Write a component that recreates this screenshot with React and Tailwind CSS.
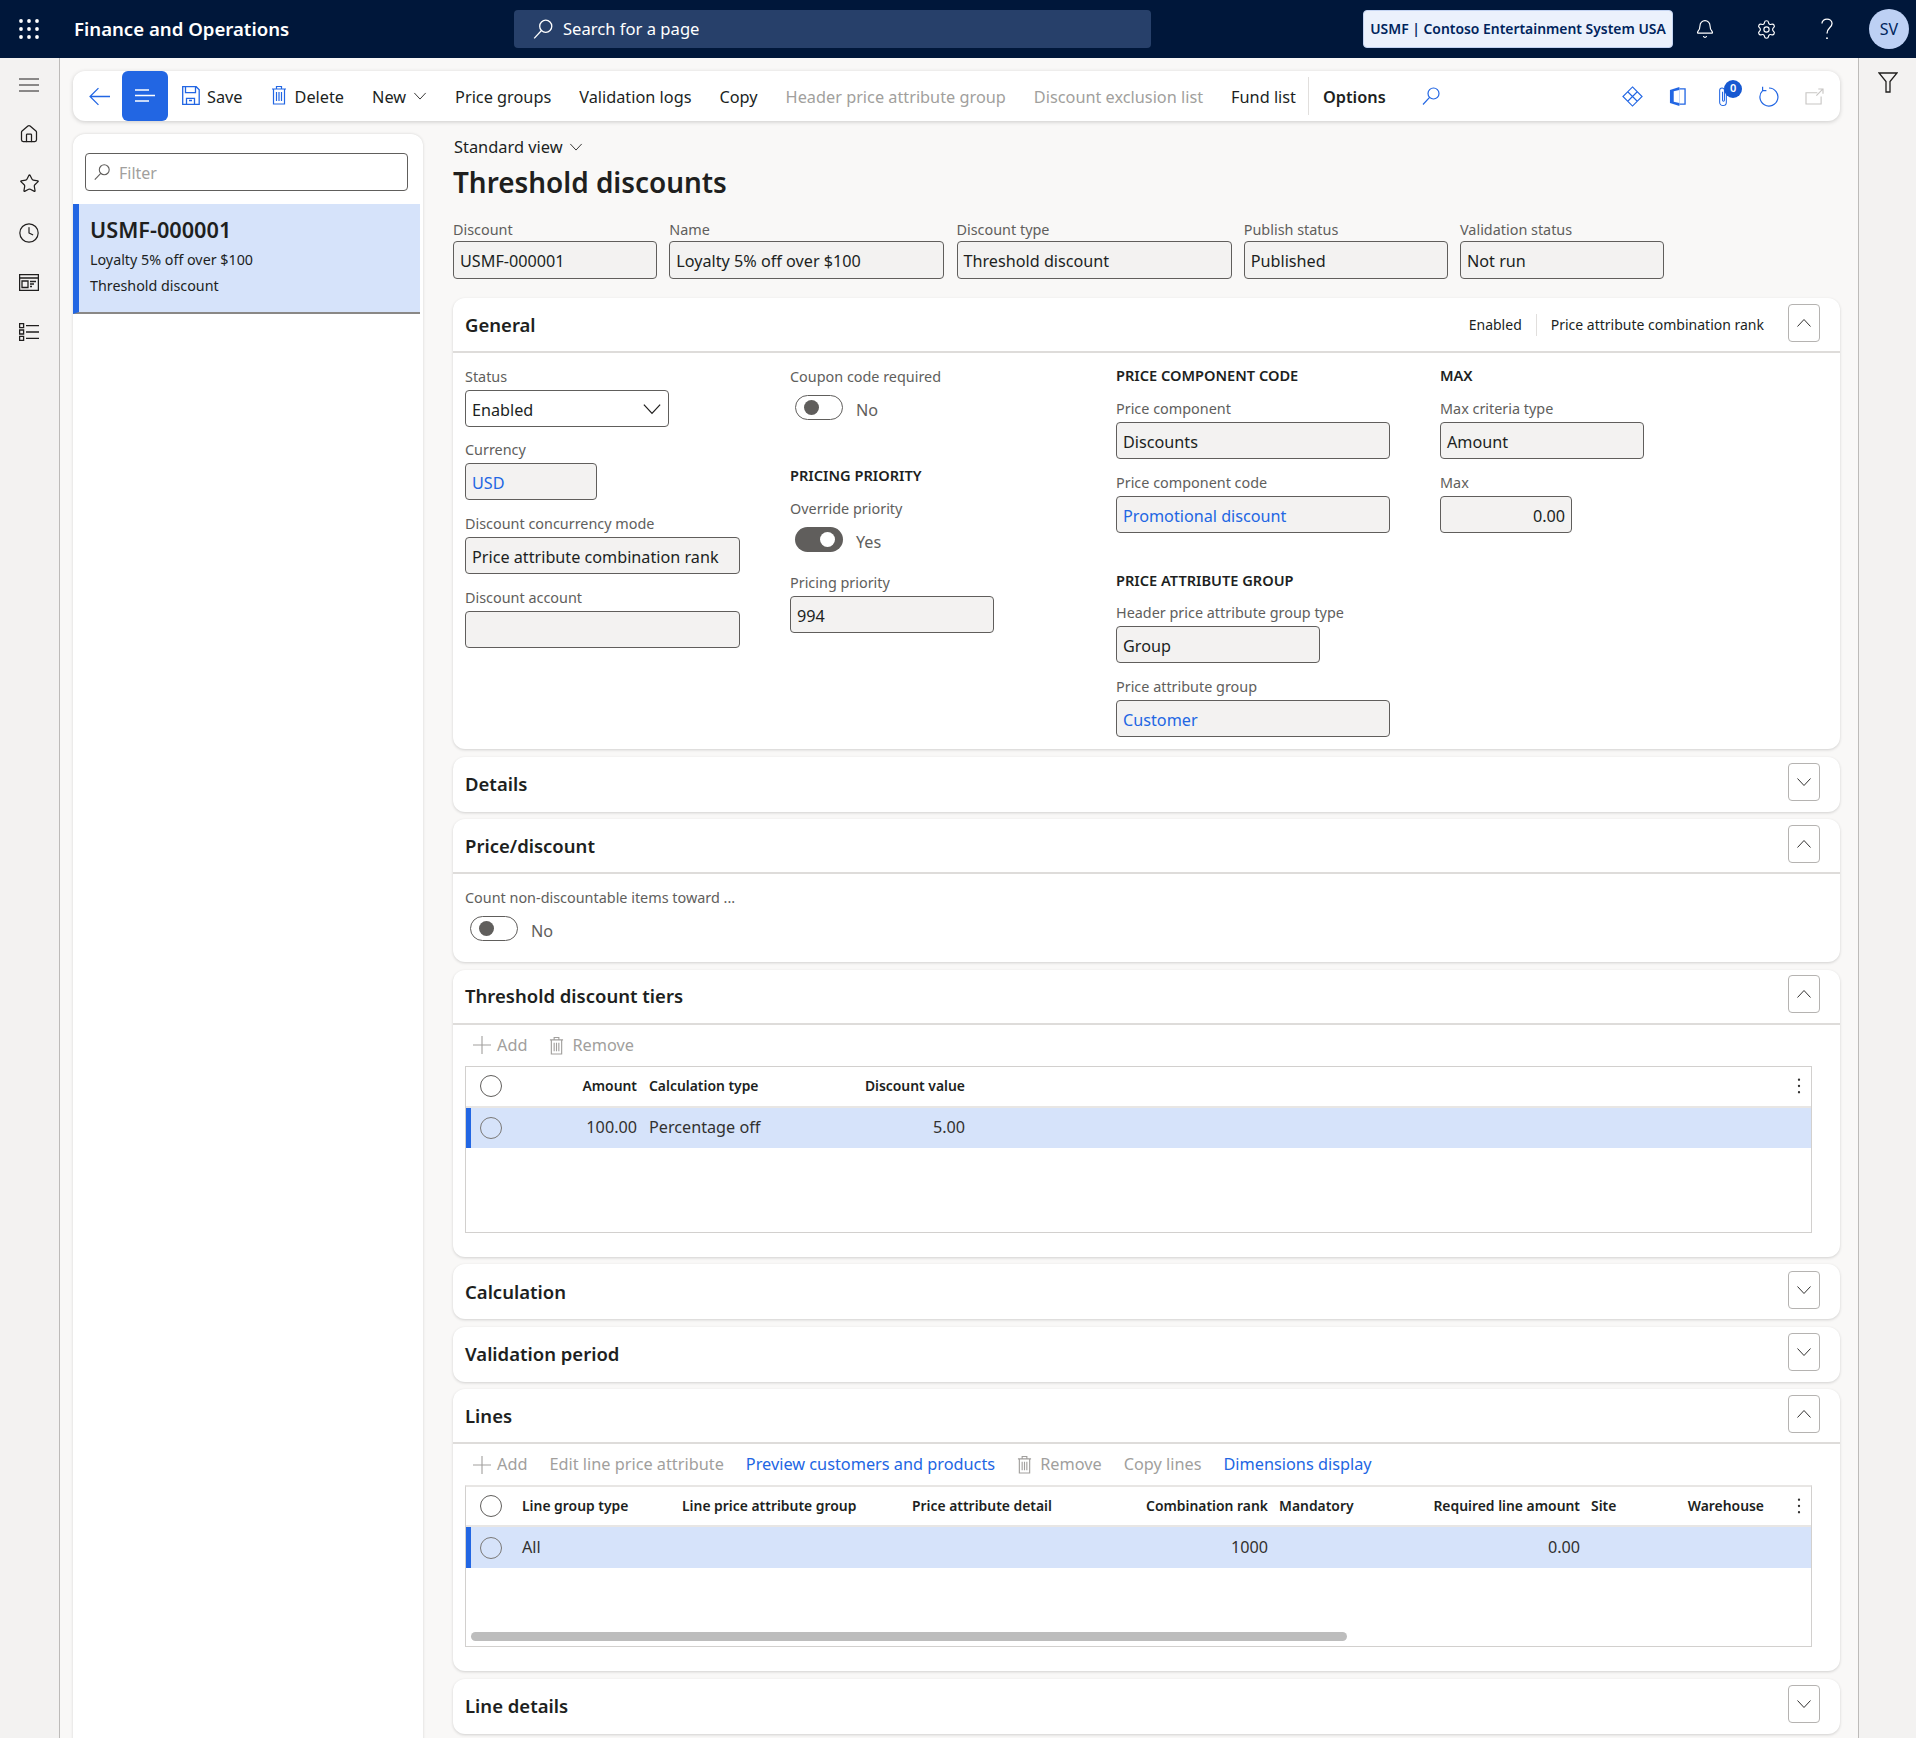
import React from "react";
import { Bell, Settings, Star, House, Clock } from "lucide-react";

const Chevron = ({ up, className = "w-[14px] h-[14px]" }) => (
  <svg viewBox="0 0 16 16" fill="none" stroke="currentColor" strokeWidth="1" className={className}>
    <path d={up ? "M1.5 11.5 8 4.5l6.5 7" : "M1.5 4.5 8 11.5l6.5-7"} />
  </svg>
);

const SearchIcon = ({ className }) => (
  <svg viewBox="0 0 20 20" fill="none" stroke="currentColor" strokeWidth="1.2" className={className}>
    <circle cx="12.5" cy="7.5" r="5.5" />
    <path d="M8.6 11.4 2 18.5" />
  </svg>
);

const Trash = ({ className }) => (
  <svg viewBox="0 0 16 20" fill="none" stroke="currentColor" strokeWidth="1.2" className={className}>
    <path d="M1 4h14M5.5 4V1.5h5V4M2.5 4v15h11V4M5.5 7v9M8 7v9M10.5 7v9" />
  </svg>
);

const Waffle = () => (
  <svg viewBox="0 0 20 20" fill="#fff" className="w-[20px] h-[20px]">
    {[2, 10, 18].map((y) =>
      [2, 10, 18].map((x) => <circle key={x + "-" + y} cx={x} cy={y} r="1.9" />)
    )}
  </svg>
);

const Dots = () => (
  <svg viewBox="0 0 4 18" fill="#323130" className="w-[4px] h-[16px]">
    <circle cx="2" cy="2" r="1.3" />
    <circle cx="2" cy="9" r="1.3" />
    <circle cx="2" cy="16" r="1.3" />
  </svg>
);

const RailButton = ({ children }) => (
  <div className="h-[49.5px] flex items-center justify-center text-[#201f1e]">{children}</div>
);

const LeftRail = () => (
  <div className="w-[60px] shrink-0 bg-[#f3f2f1] border-r border-[#bdbbb9] pt-[2px] pr-[1px]">
    <RailButton>
      <svg viewBox="0 0 20 14" fill="none" stroke="currentColor" strokeWidth="1" className="w-[20px] h-[14px]">
        <path d="M0 1h20M0 7h20M0 13h20" />
      </svg>
    </RailButton>
    <RailButton>
      <House size={20} strokeWidth={1.5} />
    </RailButton>
    <RailButton>
      <Star size={21} strokeWidth={1.4} />
    </RailButton>
    <RailButton>
      <Clock size={22} strokeWidth={1.3} />
    </RailButton>
    <RailButton>
      <svg viewBox="0 0 20 17" fill="none" stroke="currentColor" strokeWidth="1.3" className="w-[20px] h-[17px]">
        <path d="M.6.6h18.8v15.8H.6zM.6 4h18.8M3 7h6v6.5H3zM11 7.500h6M11 10h4M11 12.500h2" />
      </svg>
    </RailButton>
    <RailButton>
      <svg viewBox="0 0 20 18" fill="none" stroke="currentColor" strokeWidth="1.3" className="w-[20px] h-[18px]">
        <path d="M.6.6h4v4h-4zM.6 7h4v4h-4zM.6 13.400h4v4h-4zM7 2.600h13M7 9h13M7 15.400h13" />
      </svg>
    </RailButton>
  </div>
);

const TopBar = () => (
  <header className="h-[58px] shrink-0 bg-[#00173a] flex items-center text-white">
    <div className="w-[74px] pl-[19px]">
      <Waffle />
    </div>
    <div className="w-[440px] text-[18.600px] font-semibold">Finance and Operations</div>
    <div className="w-[637px] h-[38px] bg-[#27406a] rounded flex items-center pl-[18px] gap-[9px] text-[16.600px]">
      <SearchIcon className="w-[22px] h-[22px]" />
      Search for a page
    </div>
    <div className="ml-[212px] w-[310px] h-[38px] rounded bg-[#ebf1fc] border border-[#c4d4f2] flex items-center justify-center text-[13.900px] font-semibold text-[#00245c]">
      USMF | Contoso Entertainment System USA
    </div>
    <div className="w-[64px] flex justify-center">
      <Bell size={20} strokeWidth={1.4} />
    </div>
    <div className="w-[58px] flex justify-center">
      <Settings size={21} strokeWidth={1.3} />
    </div>
    <div className="w-[64px] flex justify-center">
      <svg viewBox="0 0 14 24" fill="none" stroke="#fff" strokeWidth="1.4" className="w-[14px] h-[22px]">
        <path d="M1.500 6c0-6.500 11-6.500 11 0 0 4.500-5.500 4.500-5.500 11" />
        <circle cx="7" cy="22" r="1" fill="#fff" stroke="none" />
      </svg>
    </div>
    <div className="ml-[10px] w-[40px] h-[40px] rounded-full bg-[#bdd0f4] text-[#00245c] flex items-center justify-center text-[16px]">
      SV
    </div>
  </header>
);

const ActionItem = ({ children, muted, bold, gap = "gap-[7px]" }) => (
  <div
    className={`flex items-center pt-[2px] whitespace-nowrap ${gap} ${muted ? "text-[#a19f9d]" : "text-[#201f1e]"} ${bold ? "font-semibold" : ""}`}
  >
    {children}
  </div>
);

const ToolIcon = ({ children }) => <div className="w-[45.500px] flex justify-center">{children}</div>;

const ActionBar = () => (
  <div className="h-[50px] bg-white rounded-xl shadow-[0_1px_4px_rgba(0,0,0,0.18)] flex items-center text-[16.300px]">
    <div className="w-[49px] pl-[16px] text-[#2266e3]">
      <svg viewBox="0 0 20 20" fill="none" stroke="currentColor" strokeWidth="1.2" className="w-[21px] h-[21px]">
        <path d="M20 10H1M9 2l-8 8 8 8" />
      </svg>
    </div>
    <div className="w-[46px] h-[50px] bg-[#2266e3] rounded-md flex items-center justify-center">
      <svg viewBox="0 0 20 14" fill="none" stroke="#fff" strokeWidth="1.300" className="w-[20px] h-[14px]">
        <path d="M0 1h14M0 6.500h20M0 12h14" />
      </svg>
    </div>
    <div className="flex items-center gap-[28px] pl-[14px]">
      <ActionItem>
        <svg viewBox="0 0 18 19" fill="none" stroke="#2266e3" strokeWidth="1.3" className="w-[18px] h-[19px] -mt-[4px]">
          <path d="M.7.700h13.500l3 3v14.600H.7zM3.500.7v6h10v-6M4.500 18.300v-6h8v6M7 14.500h3" />
        </svg>
        Save
      </ActionItem>
      <ActionItem gap="gap-[8px]">
        <Trash className="w-[16px] h-[20px] -mt-[4px] text-[#2266e3]" />
        Delete
      </ActionItem>
      <ActionItem>
        New
        <Chevron className="w-[14px] h-[14px] -mt-[2px]" />
      </ActionItem>
      <ActionItem>Price groups</ActionItem>
      <ActionItem>Validation logs</ActionItem>
      <ActionItem>Copy</ActionItem>
      <ActionItem muted>Header price attribute group</ActionItem>
      <ActionItem muted>Discount exclusion list</ActionItem>
      <ActionItem>Fund list</ActionItem>
    </div>
    <div className="ml-[12px] w-px h-[38px] bg-[#e1dfdd]" />
    <div className="ml-[14px]">
      <ActionItem bold>Options</ActionItem>
    </div>
    <SearchIcon className="ml-[35px] w-[20px] h-[20px] text-[#2266e3]" />
    <div className="ml-auto flex items-center text-[#2266e3] pr-[3px]">
      <ToolIcon>
        <svg viewBox="0 0 22 22" fill="none" stroke="currentColor" strokeWidth="1.200" className="w-[21px] h-[21px]">
          <path d="M11 1 21 11 11 21 1 11zM6 6l10 10M16 6 6 16" />
        </svg>
      </ToolIcon>
      <ToolIcon>
        <svg viewBox="0 0 18 22" className="w-[17px] h-[21px]">
          <path d="M1 4 11 1v20L1 18z" fill="#2266e3" />
          <path d="M5 5.500 11 4v14l-6-1.500z" fill="#fff" />
          <path d="M11 3h6v16h-6" fill="none" stroke="#2266e3" strokeWidth="1.400" />
        </svg>
      </ToolIcon>
      <ToolIcon>
        <div className="relative w-[22px] flex justify-center">
          <svg viewBox="0 0 10 22" fill="none" stroke="currentColor" strokeWidth="1.100" className="w-[10px] h-[21px]">
            <path d="M8.500 6v11a3.500 3.500 0 0 1-7 0V4.500a2.500 2.500 0 0 1 5 0V15a1 1 0 0 1-2 0V6" />
          </svg>
          <span className="absolute -top-[6px] left-[12px] w-[18px] h-[18px] rounded-full bg-[#1658d1] text-white text-[11px] font-semibold flex items-center justify-center">
            0
          </span>
        </div>
      </ToolIcon>
      <ToolIcon>
        <svg viewBox="0 0 20 21" fill="none" stroke="currentColor" strokeWidth="1.200" className="w-[20px] h-[21px]">
          <path d="M10 2a9 9 0 1 1-6.400 2.600M3.600.8v3.800h3.800" />
        </svg>
      </ToolIcon>
      <ToolIcon>
        <svg viewBox="0 0 20 18" fill="none" stroke="#c8c6c4" strokeWidth="1.200" className="w-[19px] h-[17px]">
          <path d="M13 5H1v12h16V9M12 8l7-7M14 1h5v5" />
        </svg>
      </ToolIcon>
    </div>
  </div>
);

const ListPanel = () => (
  <aside className="w-[350px] shrink-0 bg-white rounded-t-xl shadow-[0_0_3px_rgba(0,0,0,0.15)] pt-[19px] pr-[3px] min-h-[1650px]">
    <div className="mx-[12px] h-[38px] border border-[#605e5c] rounded flex items-center pl-[7px] gap-[8px] text-[16px] text-[#a19f9d]">
      <SearchIcon className="w-[18px] h-[18px] text-[#605e5c]" />
      <span className="pt-[2px]">Filter</span>
    </div>
    <div className="mt-[13px] h-[110px] bg-[#d6e3fa] border-l-[6px] border-[#2266e3] border-b-2 border-b-[#8a8886] pl-[11px] pt-[12px] text-[#201f1e]">
      <div className="text-[21.700px] leading-[28px] font-semibold">USMF-000001</div>
      <div className="mt-[3px] text-[14.300px] leading-[26px]">Loyalty 5% off over $100</div>
      <div className="text-[14.300px] leading-[26px]">Threshold discount</div>
    </div>
  </aside>
);

const Label = ({ children, tall }) => (
  <div className={`h-[20px] leading-[20px] text-[14.400px] text-[#605e5c] whitespace-nowrap ${tall ? "mb-[1px]" : "mb-[3px]"}`}>
    {children}
  </div>
);

const Field = ({ label, value, width, link, edit, right, chevron, tall }) => (
  <div style={{ width }}>
    <Label tall={tall}>{label}</Label>
    <div
      className={`rounded border border-[#605e5c] px-[6px] flex items-center text-[16.200px] whitespace-nowrap ${tall ? "h-[38px]" : "h-[37px]"} ${edit ? "bg-white" : "bg-[#f3f2f1]"} ${link ? "text-[#2266e3]" : "text-[#201f1e]"} ${right ? "justify-end" : "justify-between"}`}
    >
      <span className="pt-[3px]">{value}</span>
      {chevron && <Chevron up={false} className="w-[20px] h-[20px]" />}
    </div>
  </div>
);

const Toggle = ({ on, label }) => (
  <div className="flex items-center h-[25px] ml-[5px] mt-[8px] gap-[13px]">
    <div
      className={`w-[48px] h-[25px] rounded-full flex items-center px-[8px] ${on ? "bg-[#605e5c] justify-end" : "border border-[#605e5c] justify-start bg-white"}`}
    >
      <div className={`w-[15px] h-[15px] rounded-full ${on ? "bg-white" : "bg-[#605e5c]"}`} />
    </div>
    <span className="pt-[5px] text-[16.200px] text-[#605e5c]">{label}</span>
  </div>
);

const GroupTitle = ({ children, className = "" }) => (
  <div className={`h-[20px] leading-[20px] text-[14.600px] font-semibold text-[#201f1e] whitespace-nowrap ${className}`}>
    {children}
  </div>
);

const Card = ({ title, open, summary, children }) => (
  <section className="bg-white rounded-xl shadow-[0_1px_3px_rgba(0,0,0,0.16)]">
    <div className={`h-[55px] flex items-center pl-[12px] pr-[20px] ${open ? "border-b-2 border-[#dedcda]" : ""}`}>
      <h2 className="text-[18.500px] font-semibold text-[#201f1e]">{title}</h2>
      <div className="ml-auto flex items-center">
        {summary && (
          <div className="flex items-center text-[14px] text-[#201f1e] mr-[24px]">
            <span>Enabled</span>
            <span className="w-px h-[22px] bg-[#e1dfdd] mx-[14px]" />
            <span>Price attribute combination rank</span>
          </div>
        )}
        <div className="w-[32px] h-[38px] -mt-[4px] rounded border border-[#b5b3b1] flex items-center justify-center text-[#323130]">
          <Chevron up={open} className="w-[16px] h-[16px]" />
        </div>
      </div>
    </div>
    {children}
  </section>
);

const Circle = ({ muted }) => (
  <div className={`w-[22px] h-[22px] rounded-full border ${muted ? "border-[#7a7876]" : "border-[#605e5c]"}`} />
);

const SubBar = ({ children }) => (
  <div className="h-[41px] flex items-center gap-[22px] pl-[20px] text-[16.300px] text-[#a19f9d] whitespace-nowrap">
    {children}
  </div>
);

const AddBtn = () => (
  <span className="flex items-center gap-[6px]">
    <svg viewBox="0 0 18 18" fill="none" stroke="currentColor" strokeWidth="1.1" className="w-[18px] h-[18px]">
      <path d="M9 0v18M0 9h18" />
    </svg>
    Add
  </span>
);

const RemoveBtn = () => (
  <span className="flex items-center gap-[8px]">
    <Trash className="w-[15px] h-[19px]" />
    Remove
  </span>
);

const TierCell = ({ w, right, children }) => (
  <div className={`shrink-0 whitespace-nowrap ${w} ${right ? "text-right" : "pl-[12px]"}`}>{children}</div>
);

const TiersTable = () => (
  <div className="mx-[12px] h-[167px] w-[1347px] border border-[#d2d0ce]">
    <div className="h-[41px] flex items-center border-b-2 border-[#e8e6e4] text-[13.900px] font-semibold text-[#201f1e]">
      <div className="w-[49px] pl-[14px] shrink-0">
        <Circle />
      </div>
      <TierCell w="w-[122px]" right>Amount</TierCell>
      <TierCell w="w-[170px]">Calculation type</TierCell>
      <TierCell w="w-[158px]" right>Discount value</TierCell>
      <div className="ml-auto pr-[10px]">
        <Dots />
      </div>
    </div>
    <div className="h-[40px] flex items-center bg-[#d6e3fa] border-l-[5px] border-[#2266e3] text-[16.200px] text-[#323130]">
      <div className="w-[44px] pl-[9px] shrink-0">
        <Circle muted />
      </div>
      <TierCell w="w-[122px]" right>100.00</TierCell>
      <TierCell w="w-[170px]">Percentage off</TierCell>
      <TierCell w="w-[158px]" right>5.00</TierCell>
    </div>
  </div>
);

const LinesTable = () => (
  <div className="relative mx-[12px] h-[162px] w-[1347px] border border-[#d2d0ce] border-t-2 border-t-[#e8e6e4]">
    <div className="h-[40px] flex items-center border-b-2 border-[#e8e6e4] text-[13.900px] font-semibold text-[#201f1e]">
      <div className="w-[56px] pl-[14px] shrink-0">
        <Circle />
      </div>
      <div className="w-[160px] shrink-0 whitespace-nowrap">Line group type</div>
      <div className="w-[230px] shrink-0 whitespace-nowrap">Line price attribute group</div>
      <div className="w-[200px] shrink-0 whitespace-nowrap">Price attribute detail</div>
      <div className="w-[156px] shrink-0 text-right whitespace-nowrap">Combination rank</div>
      <div className="w-[154px] shrink-0 pl-[11px] whitespace-nowrap">Mandatory</div>
      <div className="w-[158px] shrink-0 text-right whitespace-nowrap">Required line amount</div>
      <div className="w-[100px] shrink-0 pl-[11px] whitespace-nowrap">Site</div>
      <div className="w-[84px] shrink-0 text-right whitespace-nowrap">Warehouse</div>
      <div className="ml-auto pr-[10px]">
        <Dots />
      </div>
    </div>
    <div className="h-[41px] flex items-center bg-[#d6e3fa] border-l-[5px] border-[#2266e3] text-[16.200px] text-[#323130]">
      <div className="w-[51px] pl-[9px] shrink-0">
        <Circle muted />
      </div>
      <div className="w-[160px] shrink-0">All</div>
      <div className="w-[430px] shrink-0" />
      <div className="w-[156px] shrink-0 text-right">1000</div>
      <div className="w-[154px] shrink-0" />
      <div className="w-[158px] shrink-0 text-right">0.00</div>
    </div>
    <div className="absolute left-[5px] bottom-[5px] w-[876px] h-[9px] rounded-full bg-[#bdbdbd]" />
  </div>
);

const FormArea = () => (
  <div className="flex-1 min-w-0">
    <div className="h-[26px] flex items-center gap-[6px] pl-[1px] text-[16.400px] text-[#201f1e]">
      Standard view
      <Chevron className="w-[14px] h-[14px]" />
    </div>
    <h1 className="mt-[2px] h-[40px] leading-[40px] text-[27.900px] font-semibold text-[#201f1e]">Threshold discounts</h1>
    <div className="mt-[18px] flex gap-[12.250px]">
      <Field tall label="Discount" value="USMF-000001" width="204px" />
      <Field tall label="Name" value="Loyalty 5% off over $100" width="275px" />
      <Field tall label="Discount type" value="Threshold discount" width="275px" />
      <Field tall label="Publish status" value="Published" width="204px" />
      <Field tall label="Validation status" value="Not run" width="204px" />
    </div>

    <div className="mt-[19px] flex flex-col gap-[7.500px]">
      <Card title="General" open summary>
        <div className="h-[396px] pl-[12px] pt-[14px] grid grid-cols-[325px_326px_324px_1fr]">
          <div className="flex flex-col gap-[14px]">
            <div className="-mb-[1px]">
              <Field label="Status" value="Enabled" width="204px" edit chevron />
            </div>
            <Field label="Currency" value="USD" width="132px" link />
            <Field label="Discount concurrency mode" value="Price attribute combination rank" width="275px" />
            <Field label="Discount account" value="" width="275px" />
          </div>
          <div>
            <Label>Coupon code required</Label>
            <Toggle label="No" />
            <GroupTitle className="mt-[45px]">PRICING PRIORITY</GroupTitle>
            <div className="mt-[14px]">
              <Label>Override priority</Label>
            </div>
            <Toggle on label="Yes" />
            <div className="mt-[21px]">
              <Field label="Pricing priority" value="994" width="204px" />
            </div>
          </div>
          <div className="-mt-[2px]">
            <GroupTitle>PRICE COMPONENT CODE</GroupTitle>
            <div className="mt-[14px] flex flex-col gap-[14px]">
              <Field label="Price component" value="Discounts" width="274px" />
              <Field label="Price component code" value="Promotional discount" width="274px" link />
            </div>
            <GroupTitle className="mt-[37px]">PRICE ATTRIBUTE GROUP</GroupTitle>
            <div className="mt-[13px] flex flex-col gap-[14px]">
              <Field label="Header price attribute group type" value="Group" width="204px" />
              <Field label="Price attribute group" value="Customer" width="274px" link />
            </div>
          </div>
          <div className="-mt-[2px]">
            <GroupTitle>MAX</GroupTitle>
            <div className="mt-[14px] flex flex-col gap-[14px]">
              <Field label="Max criteria type" value="Amount" width="204px" />
              <Field label="Max" value="0.00" width="132px" right />
            </div>
          </div>
        </div>
      </Card>

      <Card title="Details" />

      <Card title="Price/discount" open>
        <div className="h-[88px] pl-[12px] pt-[14px]">
          <Label>Count non-discountable items toward ...</Label>
          <Toggle label="No" />
        </div>
      </Card>

      <Card title="Threshold discount tiers" open>
        <div className="h-[232px]">
          <SubBar>
            <AddBtn />
            <RemoveBtn />
          </SubBar>
          <TiersTable />
        </div>
      </Card>

      <Card title="Calculation" />
      <Card title="Validation period" />

      <Card title="Lines" open>
        <div className="h-[227px]">
          <SubBar>
            <AddBtn />
            <span>Edit line price attribute</span>
            <span className="text-[#2266e3]">Preview customers and products</span>
            <RemoveBtn />
            <span>Copy lines</span>
            <span className="text-[#2266e3]">Dimensions display</span>
          </SubBar>
          <LinesTable />
        </div>
      </Card>

      <Card title="Line details" />
    </div>
  </div>
);

export default function App() {
  return (
    <div className="h-[1738px] overflow-hidden flex flex-col bg-[#f9f8f7] font-['Noto_Sans','Open_Sans',sans-serif]">
      <TopBar />
      <div className="flex-1 flex min-h-0">
        <LeftRail />
        <main className="flex-1 min-w-0 pl-[13px] pr-[18px] pt-[13px]">
          <ActionBar />
          <div className="mt-[13px] flex gap-[30px]">
            <ListPanel />
            <FormArea />
          </div>
        </main>
        <div className="w-[58px] shrink-0 bg-[#f3f2f1] border-l border-[#bdbbb9] flex justify-center pt-[14px]">
          <svg viewBox="0 0 20 21" fill="none" stroke="#201f1e" strokeWidth="1.300" className="w-[20px] h-[21px]">
            <path d="M1 1h18l-7 8.500V20H8V9.500z" />
          </svg>
        </div>
      </div>
    </div>
  );
}
